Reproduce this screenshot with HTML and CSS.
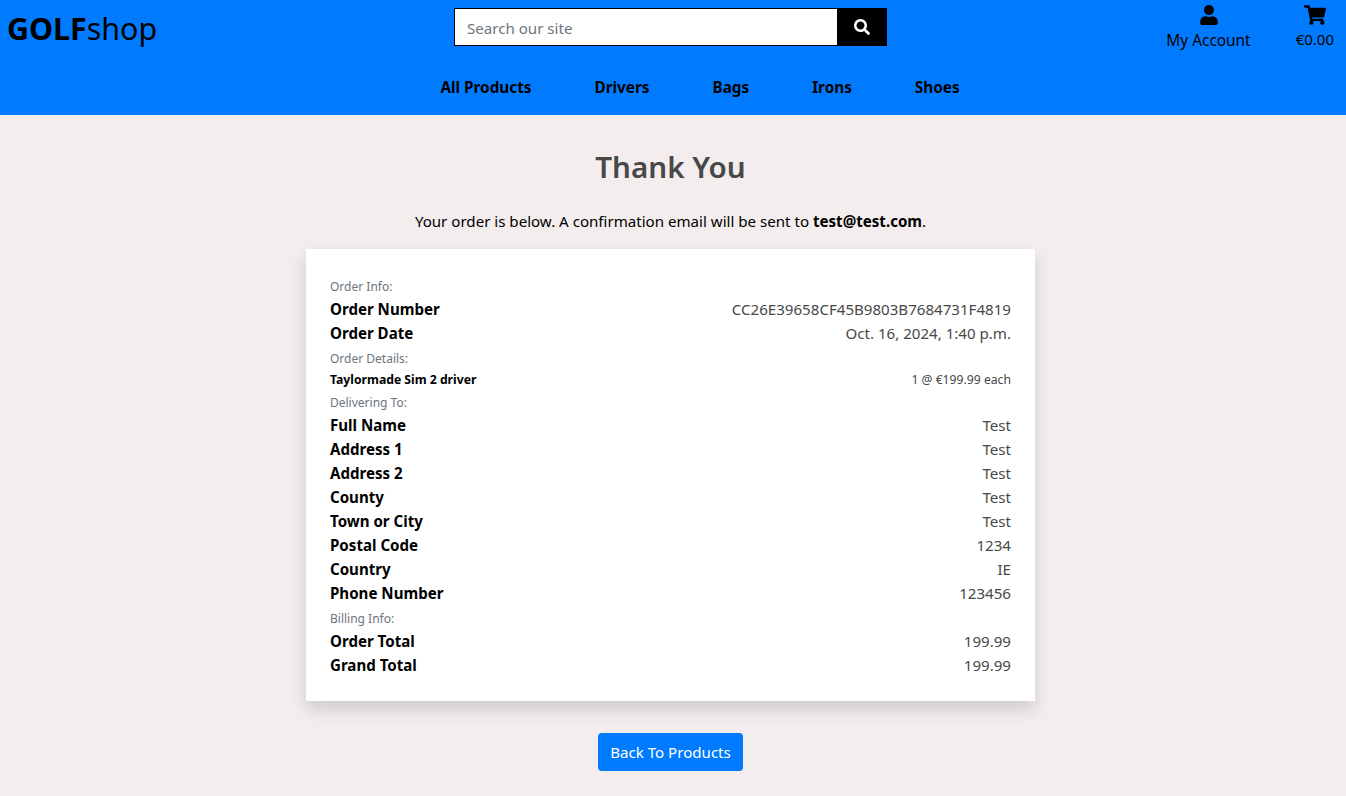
FILE: index.html
```html
<!DOCTYPE html>
<html lang="en">
<head>
  <meta charset="UTF-8">
  <title>GOLFshop - Thank You</title>
  <meta name="viewport" content="width=device-width, initial-scale=1">
  <link rel="stylesheet" href="styles.css">
</head>
<body>
  <header class="site-header">
    <div class="top-row">
      <a class="logo" href="#"><strong>GOLF</strong>shop</a>
      <form class="search">
        <input class="search-input" type="text" placeholder="Search our site">
        <button class="search-btn" type="button" aria-label="Search">
          <svg viewBox="0 0 512 512" width="16" height="16"><path fill="#fff" d="M505 442.700L405.300 343c-4.500-4.500-10.600-7-17-7H372c27.600-35.300 44-79.700 44-128C416 93.100 322.900 0 208 0S0 93.100 0 208s93.100 208 208 208c48.300 0 92.700-16.400 128-44v16.300c0 6.400 2.500 12.500 7 17l99.700 99.700c9.400 9.400 24.600 9.400 33.900 0l28.300-28.300c9.400-9.400 9.400-24.600.1-34zM208 336c-70.700 0-128-57.200-128-128 0-70.700 57.200-128 128-128 70.700 0 128 57.200 128 128 0 70.700-57.200 128-128 128z"/></svg>
        </button>
      </form>
      <div class="account-links">
        <a class="icon-link" href="#">
          <svg viewBox="0 0 448 512" width="18" height="20"><path d="M224 256c70.700 0 128-57.300 128-128S294.700 0 224 0 96 57.300 96 128s57.300 128 128 128zm89.600 32h-16.700c-22.200 10.200-46.900 16-72.900 16s-50.600-5.800-72.900-16h-16.700C60.200 288 0 348.200 0 422.400V464c0 26.500 21.500 48 48 48h352c26.500 0 48-21.500 48-48v-41.600c0-74.200-60.200-134.400-134.400-134.400z"/></svg>
          <span>My Account</span>
        </a>
        <a class="icon-link cart-link" href="#">
          <svg viewBox="0 0 576 512" width="22" height="20"><path d="M528.120 301.319l47.273-208C578.806 78.301 567.391 64 551.990 64H159.208l-9.166-44.810C147.758 8.021 137.930 0 126.529 0H24C10.745 0 0 10.745 0 24v16c0 13.255 10.745 24 24 24h69.883l70.248 343.435C147.325 417.100 136 435.222 136 456c0 30.928 25.072 56 56 56s56-25.072 56-56c0-15.674-6.447-29.835-16.824-40h209.647C430.447 426.165 424 440.326 424 456c0 30.928 25.072 56 56 56s56-25.072 56-56c0-22.172-12.888-41.332-31.579-50.405l5.517-24.276c3.413-15.018-8.002-29.319-23.403-29.319H218.117l-6.545-32h293.145c11.206 0 20.920-7.754 23.403-18.681z"/></svg>
          <span>€0.00</span>
        </a>
      </div>
    </div>
    <nav class="main-nav">
      <a href="#">All Products</a>
      <a href="#">Drivers</a>
      <a href="#">Bags</a>
      <a href="#">Irons</a>
      <a href="#">Shoes</a>
    </nav>
  </header>

  <main class="page">
    <h1 class="page-title">Thank You</h1>
    <p class="intro">Your order is below. A confirmation email will be sent to <strong>test@test.com</strong>.</p>

    <section class="order-card">
      <p class="section-label">Order Info:</p>
      <div class="row"><strong>Order Number</strong><span>CC26E39658CF45B9803B7684731F4819</span></div>
      <div class="row"><strong>Order Date</strong><span>Oct. 16, 2024, 1:40 p.m.</span></div>

      <p class="section-label">Order Details:</p>
      <div class="row row-small"><strong>Taylormade Sim 2 driver</strong><span>1 @ €199.99 each</span></div>

      <p class="section-label section-label-tight">Delivering To:</p>
      <div class="row"><strong>Full Name</strong><span>Test</span></div>
      <div class="row"><strong>Address 1</strong><span>Test</span></div>
      <div class="row"><strong>Address 2</strong><span>Test</span></div>
      <div class="row"><strong>County</strong><span>Test</span></div>
      <div class="row"><strong>Town or City</strong><span>Test</span></div>
      <div class="row"><strong>Postal Code</strong><span>1234</span></div>
      <div class="row"><strong>Country</strong><span>IE</span></div>
      <div class="row"><strong>Phone Number</strong><span>123456</span></div>

      <p class="section-label">Billing Info:</p>
      <div class="row"><strong>Order Total</strong><span>199.99</span></div>
      <div class="row"><strong>Grand Total</strong><span>199.99</span></div>
    </section>

    <a class="back-btn" href="#">Back To Products</a>
  </main>
</body>
</html>
```

FILE: styles.css
```css
* {
  box-sizing: border-box;
}

body {
  margin: 0;
  background: #f3eded;
  color: #000;
  font-family: "Noto Sans", sans-serif;
  font-size: 15.1px;
  line-height: 24px;
}

a {
  color: inherit;
  text-decoration: none;
}

/*===============================
Header
=============*/

.site-header {
  height: 115px;
  background: #007bff;
}

.top-row {
  display: grid;
  grid-template-columns: 1fr 433px 1fr;
  padding: 8px 12px 0 7px;
}

.logo {
  font-size: 30.400px;
  line-height: 42px;
}

.search {
  display: flex;
  height: 38px;
  border: 1px solid #000;
}

.search-input {
  flex: 1;
  min-width: 0;
  padding: 2px 12px 0;
  border: none;
  outline: none;
  font: inherit;
  background: #fff;
}

.search-input::placeholder {
  color: #6c757d;
}

.search-btn {
  display: flex;
  align-items: center;
  justify-content: center;
  width: 49px;
  border: none;
  background: #000;
}

.account-links {
  display: flex;
  justify-content: flex-end;
  gap: 45px;
}

.icon-link {
  display: flex;
  flex-direction: column;
  align-items: center;
  gap: 4px;
  margin-top: -3px;
  font-size: 15.400px;
}

.cart-link {
  gap: 2px;
  font-size: 15px;
}

.main-nav {
  display: flex;
  justify-content: center;
  gap: 63px;
  margin-top: 22px;
  padding-left: 54px;
  font-size: 15.300px;
  font-weight: 700;
}

/*===============================
Order confirmation
=============*/

.page {
  display: flex;
  flex-direction: column;
  align-items: center;
  padding-right: 5px;
}

.page-title {
  margin: 32px 0 22px;
  color: #484848;
  font-size: 29.600px;
  font-weight: 600;
  line-height: 40px;
}

.intro {
  margin: 0 0 16px;
}

.order-card {
  width: 729px;
  padding: 24px;
  background: #fff;
  box-shadow: 0 8px 16px rgba(0, 0, 0, 0.15);
}

.section-label {
  margin: 4px 0 1px;
  color: #6c757d;
  font-size: 12px;
  line-height: 19.200px;
}

.section-label-tight {
  margin: 3px 0 0;
}

.row {
  display: flex;
  justify-content: space-between;
  color: #484848;
}

.row strong {
  color: #000;
}

.row-small {
  font-size: 12.200px;
  line-height: 21px;
}

.back-btn {
  margin-top: 32px;
  padding: 7px 12px;
  border-radius: 4px;
  background: #007bff;
  color: #fff;
}
```
